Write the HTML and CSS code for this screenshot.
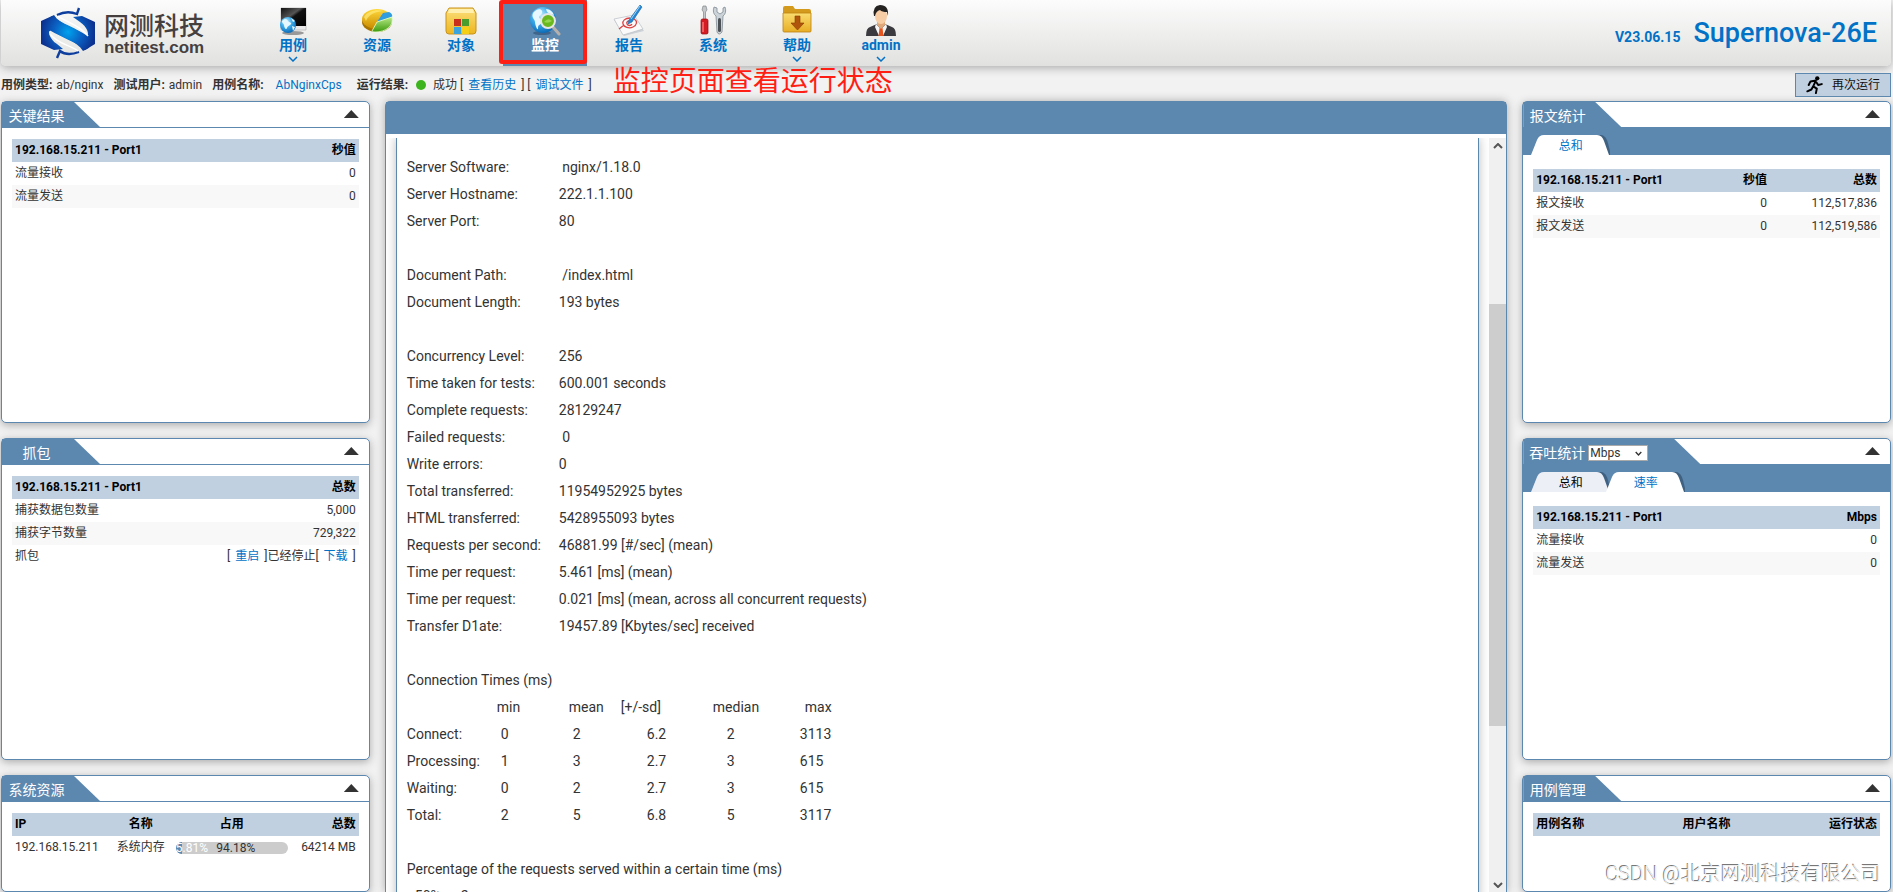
FILE: index.html
```html
<!DOCTYPE html>
<html lang="zh-CN">
<head>
<meta charset="utf-8">
<title>Supernova-26E</title>
<link rel="stylesheet" href="styles.css">
</head>
<body>
<div class="app">
  <header class="topbar">
    <a class="brand" href="#">
      <svg class="brand-mark" viewBox="0 0 54 52" aria-hidden="true">
        <defs>
          <radialGradient id="gBrand" gradientUnits="userSpaceOnUse" cx="27" cy="25" r="27"><stop offset="0" stop-color="#00a2ee"/><stop offset=".5" stop-color="#0a62c4"/><stop offset="1" stop-color="#0c3190"/></radialGradient>
        </defs>
        <path d="M0 14 11 9C20 17 37 20 47 32 50 36 50 40 46 42L42 44C36 34 20 30 10 24 6 22 8 32 16 37L22 42 13 43 0 37Z" fill="url(#gBrand)"/>
        <path d="M54 37 44 43C36 34 19 32 8 20 5 16 7 11 11 9L13 8C19 18 35 21 45 28 49 30 47 20 39 15L32 10 41 9 54 15Z" fill="url(#gBrand)"/>
        <path d="M16 8C24 4 31 5 36 7L38 1M38 45C30 48 24 48 19 44L16 51" fill="none" stroke="#0f3f9e" stroke-width="2.4"/>
        <path d="M17 9C24 15 38 17 47 29M37 44C30 38 18 38 9 27" fill="none" stroke="#fff" stroke-width="1.4"/>
      </svg>
      <span class="brand-text"><span class="brand-cn">网测科技</span><span class="brand-en">netitest.com</span></span>
    </a>
    <nav class="nav">
      <a class="nav-item" href="#">
        <svg class="nav-icon" viewBox="0 0 32 32" aria-hidden="true">
          <defs>
            <linearGradient id="gScreen" x1="0" y1="0" x2="1" y2="1"><stop offset="0" stop-color="#111"/><stop offset=".4" stop-color="#555"/><stop offset=".5" stop-color="#111"/><stop offset="1" stop-color="#000"/></linearGradient>
            <radialGradient id="gGlobe" cx=".4" cy=".3" r=".7"><stop offset="0" stop-color="#c9efff"/><stop offset=".5" stop-color="#3cabe9"/><stop offset="1" stop-color="#0d6cb8"/></radialGradient>
          </defs>
          <ellipse cx="16" cy="29" rx="11" ry="2" fill="#999"/>
          <path d="M4 4h25v22H4z" fill="#e9e9e9" stroke="#aaa" stroke-width=".6"/>
          <path d="M4 4h25v18H4z" fill="url(#gScreen)"/>
          <circle cx="11" cy="21" r="8" fill="url(#gGlobe)"/>
          <path d="M5 17c3-3 5-2 6 0s4 1 3 3-3 1-4 4-3-1-3-3-2-1-2-4zM14 14l4 3-2 1zM15 22l3 1-2 4z" fill="#e6f8ff"/>
        </svg>
        <span>用例</span>
        <svg class="chev" viewBox="0 0 10 6" aria-hidden="true"><path d="M1 1l4 4 4-4"/></svg>
      </a>
      <a class="nav-item" href="#">
        <svg class="nav-icon" viewBox="0 0 32 32" aria-hidden="true">
          <defs>
            <linearGradient id="gPie" x1="0" y1="0" x2="0" y2="1"><stop offset="0" stop-color="#ffd93a"/><stop offset="1" stop-color="#c98a00"/></linearGradient>
            <linearGradient id="gPieG" x1="0" y1="0" x2="0" y2="1"><stop offset="0" stop-color="#b8e986"/><stop offset="1" stop-color="#3b9a0c"/></linearGradient>
          </defs>
          <ellipse cx="16" cy="18" rx="15" ry="10" fill="#a87400"/>
          <ellipse cx="16" cy="15" rx="15" ry="10" fill="url(#gPie)"/>
          <path d="M16 18 22 9 28 8Q32 10 31 13Z" fill="#2f9de0"/>
          <path d="M16 18 31 13C33 22 25 28 14 28 12 28 11 27 11 27Z" fill="url(#gPieG)" stroke="#e6ffd0" stroke-width=".8"/>
          <path d="M3 13C6 7 16 5 22 7 14 8 8 10 5 17Z" fill="#ffe97a" opacity=".7"/>
        </svg>
        <span>资源</span>
      </a>
      <a class="nav-item" href="#">
        <svg class="nav-icon" viewBox="0 0 32 32" aria-hidden="true">
          <defs><linearGradient id="gBox" x1="0" y1="0" x2="0" y2="1"><stop offset="0" stop-color="#fbdf7b"/><stop offset="1" stop-color="#eeb61f"/></linearGradient></defs>
          <path d="M4 4h24l3 5v18q0 3-3 3H4q-3 0-3-3V9z" fill="url(#gBox)" stroke="#c8921a"/>
          <path d="M4 5h24l1 4H3z" fill="#fff0b0"/>
          <path d="M9 15h7v7H9z" fill="#c9301c"/><path d="M17 15h7v7h-7z" fill="#4a9c2d"/>
          <path d="M9 23h7v7H9z" fill="#38a3dc"/><path d="M17 23h7v7h-7z" fill="#f4cf16"/>
        </svg>
        <span>对象</span>
      </a>
      <a class="nav-item active" href="#" aria-current="page">
        <svg class="nav-icon" viewBox="0 0 32 32" aria-hidden="true">
          <ellipse cx="13" cy="29" rx="9" ry="2" fill="#41658a"/>
          <circle cx="14" cy="16" r="13" fill="url(#gGlobe)"/>
          <path d="M4 9C7 5 12 4 13 7s-3 4-3 6 4 2 3 5-4 2-4 6-3-3-3-6-4-4-2-9zM17 5c4 0 7 3 8 6l-4-1-3-2z" fill="#e8f8ff"/>
          <path d="M24 23l6 7" stroke="#b5b0ac" stroke-width="3" stroke-linecap="round"/>
          <circle cx="19" cy="17" r="7" fill="#68b81e" stroke="#e6e6e6" stroke-width="2"/>
          <path d="M15 18q4-5 8-1-4 3-8 1z" fill="#94d650"/>
        </svg>
        <span>监控</span>
      </a>
      <a class="nav-item" href="#">
        <svg class="nav-icon" viewBox="0 0 32 32" aria-hidden="true">
          <path d="M1 16l21-3 9 14-20 5z" fill="#cdd2d6"/>
          <path d="M1 15l20-4 9 14-20 6z" fill="#fafafa" stroke="#b9bfc4" stroke-width=".7"/>
          <path d="M17 14c-5 0-8 3-7 6s6 5 10 3 5-6 1-8M19 17c-4-1-6 1-5 3s4 2 5 0M11 21l-5 4" fill="none" stroke="#dc4242" stroke-width="1.300"/>
          <path d="M27 1l2 2-10 15-4 2 1-4z" fill="#2387d4" stroke="#175f9d" stroke-width=".6"/>
          <path d="M27 2l-9 13" stroke="#9dd6ff"/>
        </svg>
        <span>报告</span>
      </a>
      <a class="nav-item" href="#">
        <svg class="nav-icon" viewBox="0 0 32 32" aria-hidden="true">
          <path d="M6 2h3l1 4-1.500 2v9h-2V8L5 6z" fill="#c3c7ca" stroke="#72777b" stroke-width=".6"/>
          <rect x="4" y="15" width="7" height="15" rx="1.500" fill="#d41c24" stroke="#95070e" stroke-width=".7"/>
          <path d="M6 18v10" stroke="#ff8a8a" stroke-width="1.200"/>
          <path d="M17 3q-2 6 2 9l1 16q2 4 5 0l1-16q4-3 2-9l-2 1v4l-3 2-3-2V4z" fill="#ccd4da" stroke="#808a92" stroke-width=".8"/>
          <rect x="21" y="14" width="3" height="14" rx="1.500" fill="#4a5056"/>
        </svg>
        <span>系统</span>
      </a>
      <a class="nav-item" href="#">
        <svg class="nav-icon" viewBox="0 0 32 32" aria-hidden="true">
          <defs><linearGradient id="gFold" x1="0" y1="0" x2="0" y2="1"><stop offset="0" stop-color="#fadc6f"/><stop offset="1" stop-color="#e8ae25"/></linearGradient></defs>
          <path d="M2 4q0-2 2-2h8l2 3h14q2 0 2 2v20H2z" fill="#d49a1d"/>
          <path d="M2 9h28v18q0 1-1 1H3q-1 0-1-1z" fill="url(#gFold)" stroke="#bb8210" stroke-width=".8"/>
          <path d="M14 12h5v7h4l-6.500 7L10 19h4z" fill="#b0560c" stroke="#8a3c00" stroke-width=".6"/>
        </svg>
        <span>帮助</span>
        <svg class="chev" viewBox="0 0 10 6" aria-hidden="true"><path d="M1 1l4 4 4-4"/></svg>
      </a>
      <a class="nav-item" href="#">
        <svg class="nav-icon" viewBox="0 0 32 32" aria-hidden="true">
          <path d="M1 32q0-8 4-9l7-3h8l7 3q4 1 4 9z" fill="#3b3b3f"/>
          <path d="M11 20l5 5 5-5 1 3-4 9h-4l-4-9z" fill="#f6f6f6"/>
          <path d="M14.500 24h3l1 8h-5z" fill="#e5541c"/>
          <path d="M12 15h8v6l-4 4-4-4z" fill="#e0a878"/>
          <ellipse cx="16" cy="12" rx="6" ry="8" fill="#f6cda4"/>
          <path d="M9 12Q7 2 15 1q9 0 8 11l-1-4q-5 0-7-2-4 1-5 6z" fill="#252222"/>
        </svg>
        <span>admin</span>
        <svg class="chev" viewBox="0 0 10 6" aria-hidden="true"><path d="M1 1l4 4 4-4"/></svg>
      </a>
    </nav>
    <div class="product"><span class="version">V23.06.15</span><span class="model">Supernova-26E</span></div>
  </header>

  <section class="infobar">
    <span class="info"><b>用例类型:</b> ab/nginx</span>
    <span class="info"><b>测试用户:</b> admin</span>
    <span class="info wide"><b>用例名称:</b> <a href="#">AbNginxCps</a></span>
    <span class="info result"><b>运行结果:</b><i class="dot"></i><span>成功 [ <a href="#">查看历史</a> ] [ <a href="#">调试文件</a> ]</span></span>
    <strong class="note">监控页面查看运行状态</strong>
    <button class="rerun" type="button">
      <svg viewBox="0 0 20 20" aria-hidden="true">
        <circle cx="12.500" cy="2.600" r="2.400"/>
        <path d="M11 5 5 6 3 10M10.500 6 8 11.500 12 14l-1 5M8 11.500 6 15 1.500 17M11.500 7l2 3 4-1" fill="none" stroke="#000" stroke-width="2.200" stroke-linejoin="round" stroke-linecap="round"/>
      </svg>再次运行
    </button>
  </section>

  <main class="board">
    <div class="column">
      <section class="panel">
        <div class="panel-head"><h2>关键结果</h2><button class="fold" type="button" aria-label="收起"></button></div>
        <div class="panel-body">
          <table class="grid">
            <thead><tr><th>192.168.15.211 - Port1</th><th>秒值</th></tr></thead>
            <tbody><tr><td>流量接收</td><td>0</td></tr><tr><td>流量发送</td><td>0</td></tr></tbody>
          </table>
        </div>
      </section>
      <section class="panel">
        <div class="panel-head"><h2>抓包</h2><button class="fold" type="button" aria-label="收起"></button></div>
        <div class="panel-body">
          <table class="grid">
            <thead><tr><th>192.168.15.211 - Port1</th><th>总数</th></tr></thead>
            <tbody>
              <tr><td>捕获数据包数量</td><td>5,000</td></tr>
              <tr><td>捕获字节数量</td><td>729,322</td></tr>
              <tr><td>抓包</td><td>[ <a href="#">重启</a> ]已经停止[ <a href="#">下载</a> ]</td></tr>
            </tbody>
          </table>
        </div>
      </section>
      <section class="panel last">
        <div class="panel-head"><h2>系统资源</h2><button class="fold" type="button" aria-label="收起"></button></div>
        <div class="panel-body">
          <table class="grid usage">
            <thead><tr><th>IP</th><th>名称</th><th>占用</th><th>总数</th></tr></thead>
            <tbody><tr><td>192.168.15.211</td><td>系统内存</td><td><div class="meter"><div class="meter-used" style="width:5.81%">5.81%</div><span>94.18%</span></div></td><td>64214 MB</td></tr></tbody>
          </table>
        </div>
      </section>
    </div>

    <section class="console">
      <div class="console-head"></div>
      <div class="console-view">
        <div class="console-scroll">
          <div class="report">
            <table class="pairs">
              <tbody>
                <tr><th>Server Software:</th><td>&nbsp;nginx/1.18.0</td></tr>
                <tr><th>Server Hostname:</th><td>222.1.1.100</td></tr>
                <tr><th>Server Port:</th><td>80</td></tr>
              </tbody>
              <tbody>
                <tr><th>Document Path:</th><td>&nbsp;/index.html</td></tr>
                <tr><th>Document Length:</th><td>193 bytes</td></tr>
              </tbody>
              <tbody>
                <tr><th>Concurrency Level:</th><td>256</td></tr>
                <tr><th>Time taken for tests:</th><td>600.001 seconds</td></tr>
                <tr><th>Complete requests:</th><td>28129247</td></tr>
                <tr><th>Failed requests:</th><td>&nbsp;0</td></tr>
                <tr><th>Write errors:</th><td>0</td></tr>
                <tr><th>Total transferred:</th><td>11954952925 bytes</td></tr>
                <tr><th>HTML transferred:</th><td>5428955093 bytes</td></tr>
                <tr><th>Requests per second:</th><td>46881.99 [#/sec] (mean)</td></tr>
                <tr><th>Time per request:</th><td>5.461 [ms] (mean)</td></tr>
                <tr><th>Time per request:</th><td>0.021 [ms] (mean, across all concurrent requests)</td></tr>
                <tr><th>Transfer D1ate:</th><td>19457.89 [Kbytes/sec] received</td></tr>
              </tbody>
            </table>
            <p>Connection Times (ms)</p>
            <table class="times">
              <thead><tr><td></td><th>min</th><th>mean</th><th>[+/-sd]</th><th>median</th><th>max</th></tr></thead>
              <tbody>
                <tr><th>Connect:</th><td>0</td><td>2</td><td>6.2</td><td>2</td><td>3113</td></tr>
                <tr><th>Processing:</th><td>1</td><td>3</td><td>2.7</td><td>3</td><td>615</td></tr>
                <tr><th>Waiting:</th><td>0</td><td>2</td><td>2.7</td><td>3</td><td>615</td></tr>
                <tr><th>Total:</th><td>2</td><td>5</td><td>6.8</td><td>5</td><td>3117</td></tr>
              </tbody>
            </table>
            <p>Percentage of the requests served within a certain time (ms)</p>
            <table class="percent"><tbody><tr><th>50%</th><td>2</td></tr></tbody></table>
          </div>
        </div>
        <div class="scrollbar" aria-hidden="true">
          <svg viewBox="0 0 10 6"><path d="M1 5l4-4 4 4"/></svg>
          <div class="track"><div class="thumb"></div></div>
          <svg viewBox="0 0 10 6"><path d="M1 1l4 4 4-4"/></svg>
        </div>
      </div>
    </section>

    <div class="column">
      <section class="panel">
        <div class="panel-head"><h2>报文统计</h2><button class="fold" type="button" aria-label="收起"></button></div>
        <div class="tabs">
          <button class="tab on" type="button"><svg viewBox="0 0 79 20" aria-hidden="true"><path class="shade" d="M60 0h11q4 1 6 8l3 12H60z"/><path class="face" d="M0 20 6 5Q8 0 13 0H66Q71 0 73 6L78 20Z"/></svg><span>总和</span></button>
        </div>
        <div class="panel-body roomy">
          <table class="grid three">
            <thead><tr><th>192.168.15.211 - Port1</th><th>秒值</th><th>总数</th></tr></thead>
            <tbody><tr><td>报文接收</td><td>0</td><td>112,517,836</td></tr><tr><td>报文发送</td><td>0</td><td>112,519,586</td></tr></tbody>
          </table>
        </div>
      </section>
      <section class="panel">
        <div class="panel-head"><h2 class="with-unit"><label for="unit">吞吐统计</label><span class="unit"><select id="unit"><option>Mbps</option></select><svg viewBox="0 0 10 6" aria-hidden="true"><path d="M1 1l4 4 4-4"/></svg></span></h2><button class="fold" type="button" aria-label="收起"></button></div>
        <div class="tabs">
          <button class="tab" type="button"><svg viewBox="0 0 79 20" aria-hidden="true"><path class="shade" d="M60 0h11q4 1 6 8l3 12H60z"/><path class="face" d="M0 20 6 5Q8 0 13 0H66Q71 0 73 6L78 20Z"/></svg><span>总和</span></button>
          <button class="tab on" type="button"><svg viewBox="0 0 79 20" aria-hidden="true"><path class="shade" d="M60 0h11q4 1 6 8l3 12H60z"/><path class="face" d="M0 20 6 5Q8 0 13 0H66Q71 0 73 6L78 20Z"/></svg><span>速率</span></button>
        </div>
        <div class="panel-body roomy">
          <table class="grid">
            <thead><tr><th>192.168.15.211 - Port1</th><th>Mbps</th></tr></thead>
            <tbody><tr><td>流量接收</td><td>0</td></tr><tr><td>流量发送</td><td>0</td></tr></tbody>
          </table>
        </div>
      </section>
      <section class="panel last">
        <div class="panel-head"><h2>用例管理</h2><button class="fold" type="button" aria-label="收起"></button></div>
        <div class="panel-body">
          <table class="grid cases">
            <thead><tr><th>用例名称</th><th>用户名称</th><th>运行状态</th></tr></thead>
          </table>
        </div>
      </section>
    </div>
  </main>
  <div class="watermark">CSDN @北京网测科技有限公司</div>
</div>
</body>
</html>
```

FILE: styles.css
```css
:root {
  --steel: #5c87af;
  --head: #c1d0e1;
  --link: #0272c6;
}

* { box-sizing: border-box; }

body {
  margin: 0;
  background: #f2f2f2;
  color: #333;
  font: 12px/23px Roboto, "Noto Sans CJK SC", sans-serif;
}

a { color: var(--link); text-decoration: none; }
button, select { font: inherit; }
h2, p { margin: 0; font-weight: 400; }

.app {
  position: relative;
  display: flex;
  flex-direction: column;
  height: 100vh;
  overflow: hidden;
  padding: 0 2px 0 1px;
}

/* Top bar */
.topbar {
  display: flex;
  flex: none;
  height: 66px;
  border-radius: 0 0 5px 5px;
  background: linear-gradient(#fcfcfc, #e1e1df);
  box-shadow: 0 2px 10px #aaa;
}

.brand {
  display: flex;
  align-items: center;
  gap: 9px;
  width: 250px;
  padding-left: 40px;
}
.brand-mark { width: 54px; height: 52px; }
.brand-text { display: flex; flex-direction: column; padding-top: 3px; color: #45403f; }
.brand-cn { font-size: 25px; line-height: 26px; font-weight: 500; }
.brand-en { font: bold 17px/16px "Liberation Sans", sans-serif; }

.nav { display: flex; }
.nav-item {
  position: relative;
  display: flex;
  flex-direction: column;
  align-items: center;
  width: 84px;
  padding-top: 4px;
  font-size: 14px;
  line-height: 18px;
  font-weight: 700;
}
.nav-icon { width: 32px; height: 32px; }
.chev {
  width: 10px;
  height: 6px;
  margin-top: 2px;
  fill: none;
  stroke: var(--link);
  stroke-width: 1.5;
}
.nav-item.active { background: var(--steel); color: #fff; }
.nav-item.active::after {
  content: "";
  position: absolute;
  inset: 0 0 2px -4px;
  border: 4px solid #ff1e14;
  border-radius: 3px;
}

.product {
  display: flex;
  align-items: baseline;
  gap: 13px;
  margin-left: auto;
  padding: 16px 14px 0 0;
  color: var(--link);
  font-weight: 500;
}
.version { font-size: 14px; font-weight: 700; }
.model { font-size: 27px; line-height: 34px; }

/* Run information */
.infobar {
  display: flex;
  flex: none;
  align-items: center;
  height: 35px;
  padding-top: 3px;
}
.info { margin-right: 10px; white-space: nowrap; }
.info b { font-weight: 700; margin-right: 1px; }
.info.wide { margin-right: 15px; }
.info.wide a { margin-left: 8px; }
.info.result { display: flex; align-items: center; margin-right: 21px; }
.info.result a { margin: 0 2px; }
.dot {
  width: 10px;
  height: 10px;
  margin: 0 7px;
  border-radius: 50%;
  background: #3cb41e;
}
.note { color: #ff1e14; font-size: 28px; line-height: 32px; font-weight: 400; padding-bottom: 7px; }
.rerun {
  display: flex;
  align-items: center;
  gap: 8px;
  height: 24px;
  margin-left: auto;
  padding: 0 10px;
  border: 1px solid var(--steel);
  background: var(--head);
  color: #111;
}
.rerun svg { width: 18px; height: 18px; }

/* Three-column board */
.board {
  display: grid;
  flex: 1;
  grid-template-columns: 23fr 70fr 23fr;
  gap: 15px;
  min-height: 0;
}
.column { display: flex; flex-direction: column; gap: 15px; min-width: 0; }

.panel {
  min-height: 322px;
  border: 1px solid var(--steel);
  border-radius: 5px;
  background: #fff;
  box-shadow: 0 2px 8px #aaa;
}
.panel.last { flex: 1; min-height: 0; }

.panel-head {
  display: flex;
  justify-content: space-between;
  height: 26px;
  border-bottom: 1px solid var(--steel);
}
.panel-head h2 {
  padding: 3px 35px 0 6px;
  min-width: 98px;
  background: var(--steel);
  clip-path: polygon(0 0, calc(100% - 26px) 0, 100% 100%, 0 100%);
  color: #fff;
  font-size: 14px;
  line-height: 23px;
  text-align: center;
}
.panel-head h2.with-unit { display: flex; align-items: center; gap: 3px; padding-right: 52px; }
.unit { position: relative; display: flex; }
.unit select {
  width: 60px;
  height: 16px;
  padding: 0 1px;
  border: 1px solid #aaa;
  border-radius: 0;
  appearance: none;
  background: #fff;
  color: #333;
  font-size: 12px;
  line-height: 14px;
}
.unit svg {
  position: absolute;
  top: 6px;
  right: 6px;
  width: 7px;
  height: 5px;
  fill: none;
  stroke: #333;
  stroke-width: 2;
  pointer-events: none;
}
.fold {
  width: 15px;
  height: 8px;
  margin: 8px 10px 0 0;
  padding: 0;
  border: 0;
  background: #333;
  clip-path: polygon(50% 0, 100% 100%, 0 100%);
}

.tabs { display: flex; height: 27px; padding: 7px 0 0 8px; background: var(--steel); }
.tab {
  position: relative;
  width: 79px;
  height: 20px;
  margin-right: -4px;
  padding: 0;
  border: 0;
  background: none;
  color: #000;
  line-height: 22px;
}
.tab svg { position: absolute; inset: 0; width: 79px; height: 20px; }
.tab span { position: relative; }
.tab .face { fill: #eceff5; }
.tab .shade { fill: #35536f; opacity: .7; }
.tab.on { color: var(--link); }
.tab.on .face { fill: #fff; }

.panel-body { padding: 11px 10px; }
.panel-body.roomy { padding-top: 14px; }

.grid { width: 100%; border-collapse: collapse; }
.grid th, .grid td { height: 23px; padding: 0 3px; text-align: right; line-height: 23px; white-space: nowrap; }
.grid th { color: #000; font-weight: 700; }
.grid thead { background: var(--head); }
.grid th:first-child, .grid td:first-child { text-align: left; }
.grid tbody tr:nth-child(even) { background: #f8f8f8; }
.grid td a { margin: 0 2px; }
.grid.three th:nth-child(2) { width: 70px; }
.grid.three th:nth-child(3) { width: 110px; }
.grid.usage th:nth-child(n+2):nth-child(-n+3),
.grid.usage td:nth-child(n+2):nth-child(-n+3) { text-align: center; }
.grid.usage th:nth-child(2) { width: 64px; }
.grid.usage th:nth-child(3) { width: 118px; }
.grid.usage th:nth-child(4) { width: 68px; }
.grid.cases th { width: 33%; }
.grid.cases th:nth-child(2) { text-align: center; }

.meter {
  display: flex;
  height: 12px;
  border-radius: 6px;
  background: #ccc;
  line-height: 13px;
}
.meter-used { border-radius: 6px 0 0 6px; background: var(--steel); color: #fff; }
.meter span { margin-left: 34px; }

/* Test output */
.console {
  display: flex;
  flex-direction: column;
  min-width: 0;
  min-height: 0;
  border: 1px solid var(--steel);
  border-bottom: 0;
  border-radius: 5px 5px 0 0;
  background: #fff;
  box-shadow: 0 0 10px #aaa;
}
.console-head { flex: none; height: 32px; background: var(--steel); }
.console-view { display: flex; flex: 1; min-height: 0; margin-top: 4px; }
.console-scroll { flex: 1; min-width: 0; overflow: hidden; padding: 0 10px; }
.report {
  padding: 16px 10px;
  border: solid var(--steel);
  border-width: 0 1px;
  box-shadow: 0 0 10px #bbb;
  font-size: 14px;
  line-height: 27px;
}
.report table { border-collapse: collapse; margin-bottom: 27px; }
.report th, .report td { padding: 0; text-align: left; font-weight: 400; line-height: 27px; height: 27px; }
.report .pairs th { width: 152px; }
.pairs tbody + tbody::before { content: ""; display: block; height: 27px; }
.times td:first-child, .times th:first-child { width: 90px; }
.times th:nth-child(2) { width: 72px; }
.times th:nth-child(3) { width: 52px; }
.times th:nth-child(4) { width: 92px; }
.times th:nth-child(5) { width: 87px; }
.report .times tbody td:nth-child(n+2):nth-child(-n+3) { padding-left: 4px; }
.report .times tbody td:nth-child(4) { padding-left: 26px; }
.report .times tbody td:nth-child(5) { padding-left: 14px; }
.report .times thead th:last-child { padding-left: 5px; }
.report .percent th { width: 54px; padding-left: 8px; }

.scrollbar {
  display: flex;
  flex-direction: column;
  align-items: center;
  width: 17px;
  padding: 5px 0 4px;
  background: #f0f0f0;
}
.scrollbar svg { width: 10px; height: 6px; fill: none; stroke: #555; stroke-width: 2; }
.track { flex: 1; width: 100%; margin: 6px 0; }
.thumb { height: 58.5%; margin-top: 149px; background: #cdcdcd; }

.watermark {
  position: absolute;
  right: 12px;
  bottom: 3px;
  color: #eee;
  font-size: 20px;
  font-weight: 300;
  line-height: 30px;
  text-shadow: -1px -1px 0 #777;
}
```
